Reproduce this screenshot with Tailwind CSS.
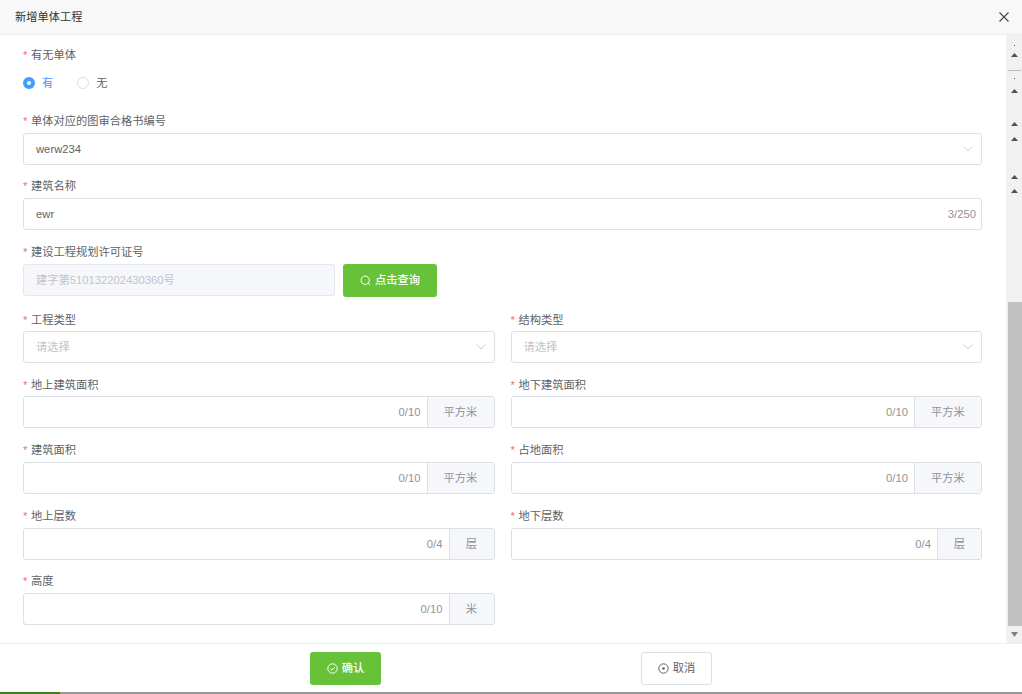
<!DOCTYPE html>
<html lang="zh-CN">
  <head>
    <meta charset="UTF-8" />
    <meta name="viewport" content="width=device-width, initial-scale=1.0" />
    <title>新增单体工程</title>
    <script src="https://cdn.jsdelivr.net/npm/@tailwindcss/browser@4"></script>
  </head>
  <body class="bg-white text-[#606266] text-[11.25px] font-['Liberation_Sans','Noto_Sans_CJK_SC',sans-serif]">
    <div class="w-[1022px] h-[694px] flex flex-col overflow-hidden">

      <!-- header -->
      <div class="h-[35px] shrink-0 flex items-center justify-between pl-[15px] pr-[13px] bg-[#f8f8f8] border-b border-[#eeeeee] text-[#333333]">
        <span>新增单体工程</span>
        <svg width="10" height="10" viewBox="0 0 10 10" fill="none" stroke="#4a4a4a" stroke-width="1.2"><path d="M0.5 0.5 L9.5 9.5 M9.5 0.5 L0.5 9.5" /></svg>
      </div>

      <!-- body -->
      <div class="h-[608px] shrink-0 flex">
        <div class="w-[1006px] pl-[23px] pr-[24px] pt-[7px]">

          <div class="h-[26px] flex items-center"><span class="text-[#f56c6c] w-[8px]">*</span>有无单体</div>
          <div class="h-[30px] flex items-center">
            <span class="w-[12px] h-[12px] rounded-full bg-[#409eff] flex items-center justify-center"><span class="w-[4px] h-[4px] rounded-full bg-white"></span></span>
            <span class="ml-[7px] text-[#409eff]">有</span>
            <span class="ml-[24px] w-[12px] h-[12px] rounded-full border border-[#dcdfe6] bg-white"></span>
            <span class="ml-[7px]">无</span>
          </div>

          <div class="mt-[9px] h-[26px] pt-[2px] flex items-center"><span class="text-[#f56c6c] w-[8px]">*</span>单体对应的图审合格书编号</div>
          <div class="h-[32px] border border-[#dcdfe6] rounded-[3px] flex items-center justify-between pl-[12px] pr-[8px]">
            <span>werw234</span>
            <svg width="10" height="6" viewBox="0 0 10 6" fill="none" stroke="#c8cbd2"><path d="M0.5 0.5 L5 5 L9.5 0.5" /></svg>
          </div>

          <div class="mt-[7px] h-[26px] pt-[2px] flex items-center"><span class="text-[#f56c6c] w-[8px]">*</span>建筑名称</div>
          <div class="h-[32px] border border-[#dcdfe6] rounded-[3px] flex items-center justify-between pl-[12px] pr-[5px]">
            <span>ewr</span>
            <span class="text-[#909399]">3/250</span>
          </div>

          <div class="mt-[8px] h-[26px] pt-[2px] flex items-center"><span class="text-[#f56c6c] w-[8px]">*</span>建设工程规划许可证号</div>
          <div class="flex items-start gap-[8px]">
            <div class="w-[312px] h-[32px] border border-[#e4e7ed] bg-[#f5f7fa] rounded-[3px] flex items-center pl-[12px] text-[#c0c4cc]">建字第510132202430360号</div>
            <div class="w-[94px] h-[33px] bg-[#67c23a] rounded-[3px] text-white font-medium flex items-center justify-center gap-[4px]">
              <svg width="11" height="11" viewBox="0 0 11 11" fill="none" stroke="white"><circle cx="5.2" cy="5.2" r="4.2" /><path d="M8.2 8.2 L10 10" /></svg>
              <span>点击查询</span>
            </div>
          </div>

          <div class="mt-[8px] grid grid-cols-2 gap-x-[16px]">
            <div>
              <div class="h-[26px] pt-[4px] flex items-center"><span class="text-[#f56c6c] w-[8px]">*</span>工程类型</div>
              <div class="h-[32px] border border-[#dcdfe6] rounded-[3px] flex items-center justify-between pl-[12px] pr-[8px] text-[#c0c4cc]">
                <span>请选择</span>
                <svg width="10" height="6" viewBox="0 0 10 6" fill="none" stroke="#c8cbd2"><path d="M0.5 0.5 L5 5 L9.5 0.5" /></svg>
              </div>
            </div>
            <div>
              <div class="h-[26px] pt-[4px] flex items-center"><span class="text-[#f56c6c] w-[8px]">*</span>结构类型</div>
              <div class="h-[32px] border border-[#dcdfe6] rounded-[3px] flex items-center justify-between pl-[12px] pr-[8px] text-[#c0c4cc]">
                <span>请选择</span>
                <svg width="10" height="6" viewBox="0 0 10 6" fill="none" stroke="#c8cbd2"><path d="M0.5 0.5 L5 5 L9.5 0.5" /></svg>
              </div>
            </div>
          </div>

          <div class="mt-[7px] grid grid-cols-2 gap-x-[16px]">
            <div>
              <div class="h-[26px] pt-[4px] flex items-center"><span class="text-[#f56c6c] w-[8px]">*</span>地上建筑面积</div>
              <div class="h-[32px] border border-[#dcdfe6] rounded-[3px] flex">
                <input type="text" class="flex-1 min-w-0 outline-none" />
                <span class="self-center pr-[6px] text-[#909399]">0/10</span>
                <span class="w-[67px] border-l border-[#dcdfe6] bg-[#f5f7fa] rounded-r-[3px] flex items-center justify-center text-[#909399]">平方米</span>
              </div>
            </div>
            <div>
              <div class="h-[26px] pt-[4px] flex items-center"><span class="text-[#f56c6c] w-[8px]">*</span>地下建筑面积</div>
              <div class="h-[32px] border border-[#dcdfe6] rounded-[3px] flex">
                <input type="text" class="flex-1 min-w-0 outline-none" />
                <span class="self-center pr-[6px] text-[#909399]">0/10</span>
                <span class="w-[67px] border-l border-[#dcdfe6] bg-[#f5f7fa] rounded-r-[3px] flex items-center justify-center text-[#909399]">平方米</span>
              </div>
            </div>
          </div>

          <div class="mt-[8px] grid grid-cols-2 gap-x-[16px]">
            <div>
              <div class="h-[26px] pt-[2px] flex items-center"><span class="text-[#f56c6c] w-[8px]">*</span>建筑面积</div>
              <div class="h-[32px] border border-[#dcdfe6] rounded-[3px] flex">
                <input type="text" class="flex-1 min-w-0 outline-none" />
                <span class="self-center pr-[6px] text-[#909399]">0/10</span>
                <span class="w-[67px] border-l border-[#dcdfe6] bg-[#f5f7fa] rounded-r-[3px] flex items-center justify-center text-[#909399]">平方米</span>
              </div>
            </div>
            <div>
              <div class="h-[26px] pt-[2px] flex items-center"><span class="text-[#f56c6c] w-[8px]">*</span>占地面积</div>
              <div class="h-[32px] border border-[#dcdfe6] rounded-[3px] flex">
                <input type="text" class="flex-1 min-w-0 outline-none" />
                <span class="self-center pr-[6px] text-[#909399]">0/10</span>
                <span class="w-[67px] border-l border-[#dcdfe6] bg-[#f5f7fa] rounded-r-[3px] flex items-center justify-center text-[#909399]">平方米</span>
              </div>
            </div>
          </div>

          <div class="mt-[8px] grid grid-cols-2 gap-x-[16px]">
            <div>
              <div class="h-[26px] pt-[2px] flex items-center"><span class="text-[#f56c6c] w-[8px]">*</span>地上层数</div>
              <div class="h-[32px] border border-[#dcdfe6] rounded-[3px] flex">
                <input type="text" class="flex-1 min-w-0 outline-none" />
                <span class="self-center pr-[6px] text-[#909399]">0/4</span>
                <span class="w-[45px] border-l border-[#dcdfe6] bg-[#f5f7fa] rounded-r-[3px] flex items-center justify-center text-[#909399]">层</span>
              </div>
            </div>
            <div>
              <div class="h-[26px] pt-[2px] flex items-center"><span class="text-[#f56c6c] w-[8px]">*</span>地下层数</div>
              <div class="h-[32px] border border-[#dcdfe6] rounded-[3px] flex">
                <input type="text" class="flex-1 min-w-0 outline-none" />
                <span class="self-center pr-[6px] text-[#909399]">0/4</span>
                <span class="w-[44px] border-l border-[#dcdfe6] bg-[#f5f7fa] rounded-r-[3px] flex items-center justify-center text-[#909399]">层</span>
              </div>
            </div>
          </div>

          <div class="mt-[7px] grid grid-cols-2 gap-x-[16px]">
            <div>
              <div class="h-[26px] pt-[2px] flex items-center"><span class="text-[#f56c6c] w-[8px]">*</span>高度</div>
              <div class="h-[32px] border border-[#dcdfe6] rounded-[3px] flex">
                <input type="text" class="flex-1 min-w-0 outline-none" />
                <span class="self-center pr-[6px] text-[#909399]">0/10</span>
                <span class="w-[45px] border-l border-[#dcdfe6] bg-[#f5f7fa] rounded-r-[3px] flex items-center justify-center text-[#909399]">米</span>
              </div>
            </div>
          </div>
        </div>

        <!-- scrollbar with search-hit ticks -->
        <svg width="16" height="608" viewBox="0 0 16 608" class="shrink-0 bg-[#f1f1f1]">
          <rect x="2" y="267" width="14" height="324" fill="#c1c1c1" />
          <rect x="2" y="35" width="13" height="1" fill="#bbbbbb" />
          <rect x="8" y="10" width="1" height="1" fill="#505050" />
          <rect x="8" y="43" width="1" height="1" fill="#505050" />
          <path d="M8.5 18 L12 22 L5 22 Z" fill="#505050" />
          <path d="M8.5 54 L12 58 L5 58 Z" fill="#505050" />
          <path d="M8.5 87 L12 91 L5 91 Z" fill="#505050" />
          <path d="M8.5 102 L12 106 L5 106 Z" fill="#505050" />
          <path d="M8.5 140 L12 144 L5 144 Z" fill="#505050" />
          <path d="M8.5 154 L12 158 L5 158 Z" fill="#505050" />
          <path d="M8.5 602 L5 597 L12 597 Z" fill="#808080" />
        </svg>
      </div>

      <!-- footer -->
      <div class="h-[49px] shrink-0 border-t border-[#eeeeee] pt-[8px] pl-[310px] flex items-start gap-[260px]">
        <div class="w-[71px] h-[33px] bg-[#67c23a] rounded-[3px] text-white font-medium flex items-center justify-center gap-[4px]">
          <svg width="11" height="11" viewBox="0 0 11 11" fill="none" stroke="white"><circle cx="5.5" cy="5.5" r="4.7" /><path d="M3.2 5.6 L5 7.2 L7.9 4" /></svg>
          <span>确认</span>
        </div>
        <div class="w-[71px] h-[33px] border border-[#dcdfe6] rounded-[3px] flex items-center justify-center gap-[4px]">
          <svg width="11" height="11" viewBox="0 0 11 11" fill="none" stroke="#606266"><circle cx="5.5" cy="5.5" r="4.7" /><circle cx="5.5" cy="5.5" r="1.3" fill="#606266" stroke="none" /></svg>
          <span>取消</span>
        </div>
      </div>

      <!-- bottom progress strip -->
      <div class="h-[2px] shrink-0 bg-[#999999]"><div class="w-[60px] h-[2px] bg-[#3f7f1f]"></div></div>
    </div>
  </body>
</html>
